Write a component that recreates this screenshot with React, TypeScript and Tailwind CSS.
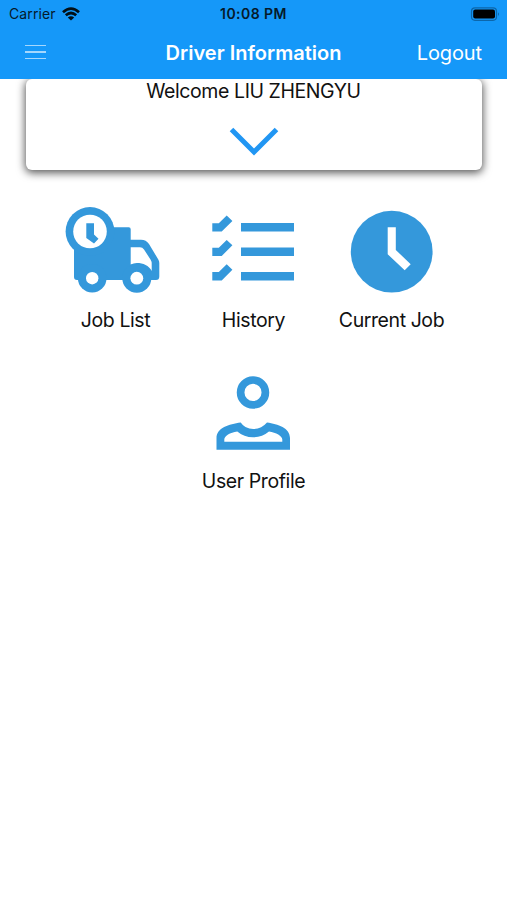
import React from "react";

type TileProps = { label: string; spacing: string; viewBox: string; children: React.ReactNode };

function Tile({ label, spacing, viewBox, children }: TileProps) {
  return (
    <button className="flex w-[138px] flex-col items-center">
      <svg viewBox={viewBox} className="h-[106px] w-[138px]" fill="#3498db">
        {children}
      </svg>
      <span className={"h-6 whitespace-nowrap text-[19.5px] leading-6 " + spacing}>{label}</span>
    </button>
  );
}

function StatusBar() {
  return (
    <div className="grid h-7 grid-cols-3 items-center pl-[9px] pr-[7px] text-[14px] leading-7 text-[#051a2b]">
      <div className="flex items-center gap-[6px]">
        <span className="tracking-[0.1px]">Carrier</span>
        <svg viewBox="0 0 18 14" className="h-[14px] w-[18px]" fill="none" stroke="#021018" strokeWidth="2.7">
          <path d="M1 5.2Q9-2 17 5.2M3.8 8.3Q9 3.7 14.2 8.3" />
          <path d="M9 13.6 5.8 10.5Q9 7.8 12.2 10.5Z" fill="#021018" stroke="none" />
        </svg>
      </div>
      <span className="-ml-[2px] text-center font-semibold tracking-[0.45px]">10:08 PM</span>
      <svg viewBox="0 0 30 14" className="h-[14px] w-[30px] justify-self-end">
        <rect x="1.5" y=".9" width="25" height="12.4" rx="3.5" fill="none" stroke="#0c66aa" strokeWidth="1.2" />
        <rect x="3.2" y="2.6" width="21.8" height="9" rx="2" fill="#000" />
        <path d="M28 5.2q2 1.8 0 3.7Z" fill="#0c66aa" />
      </svg>
    </div>
  );
}

export default function App() {
  return (
    <div className="flex h-[900px] w-[507px] flex-col overflow-hidden bg-white font-['Inter','Liberation_Sans',sans-serif] text-[#111]">
      <header className="relative z-10 h-[79px] shrink-0 bg-[#1598f9]">
        <StatusBar />
        <div className="grid h-[48px] grid-cols-[1fr_auto_1fr] items-center px-[25px] text-white">
          <button aria-label="Menu" className="flex w-[21px] flex-col gap-[5px]">
            <span className="h-[1.5px] bg-[#a5d7fd]" />
            <span className="h-[1.5px] bg-[#a5d7fd]" />
            <span className="h-[1.5px] bg-[#a5d7fd]" />
          </button>
          <h1 className="pt-px text-[20px] font-semibold tracking-[0.02px]">Driver Information</h1>
          <button className="justify-self-end pt-px text-[20px] tracking-[-0.1px]">Logout</button>
        </div>
      </header>
      <section className="mx-[25.5px] flex h-[91px] shrink-0 flex-col items-center rounded-[6px] bg-white shadow-[0_2px_9px_1px_rgba(0,0,0,0.65)]">
        <p className="h-6 whitespace-nowrap text-[19.5px] leading-6 tracking-[-0.42px]">Welcome LIU ZHENGYU</p>
        <svg viewBox="229 126 50 32" className="mt-[23px] h-8 w-[50px]" fill="none" stroke="#2196f3" strokeWidth="5">
          <path d="M231.5 129.5 254 152 276.5 129.5" />
        </svg>
      </section>
      <main className="mx-auto mt-[32px] flex w-[414px] flex-wrap justify-center gap-y-[31px]">
        <Tile label="Job List" spacing="tracking-[-0.42px]" viewBox="47 202 138 106">
          <path fillRule="evenodd" d="M74 231V277q0 3 3 3H156q3.3 0 3.3-3.5V263q0-2-1-3.5L149 244q-2.8-4.3-8-4.3H130.7V229.3q0-2-2-2H105ZM130.7 247.3H140q2.5 0 4 2.3l6.5 9.8q1.2 2 1.2 4V271C149 265.5 143 263 137 263q-3.5 0-6.3 1.5Z" />
          <circle cx="92.2" cy="278.2" r="14.3" />
          <circle cx="136.8" cy="278.2" r="14.5" />
          <circle cx="90" cy="231.5" r="24.4" />
          <circle cx="90" cy="231.5" r="16.8" fill="#fff" />
          <circle cx="92.2" cy="278.2" r="6.2" fill="#fff" />
          <circle cx="136.8" cy="278.2" r="6.4" fill="#fff" />
          <path d="M86.3 223.3H94V234.5L98.5 238.8 94 243.5 86.3 238Z" />
        </Tile>
        <Tile label="History" spacing="tracking-[-0.38px]" viewBox="185 202 138 106">
          {[0, 24.4, 48.8].map((y) => (
            <g key={y} transform={`translate(0 ${y})`}>
              <path d="M212.3 223.3H218.8L226.7 215.5 232.4 220.9 221.7 231.6H212.3Z" />
              <path d="M241 223.1H294V231.6H241Z" />
            </g>
          ))}
        </Tile>
        <Tile label="Current Job" spacing="tracking-[-0.42px]" viewBox="323 202 138 106">
          <circle cx="391.7" cy="251.7" r="40.9" />
          <path fill="#fff" d="M387.7 227.3H395.8V250L410.7 264.2 404.7 270.2 387.7 254.3Z" />
        </Tile>
        <Tile label="User Profile" spacing="tracking-[-0.4px]" viewBox="185 363 138 106">
          <circle cx="253" cy="392.4" r="12.4" fill="none" stroke="#3498db" strokeWidth="7.7" />
          <path fillRule="evenodd" d="M216.5 449.7V438C216.5 428 229 424 240.7 422.5Q245 429 253.2 429T267 422.5C278 424 290 428 290 438V449.7ZM224.3 441.8H282.3V439.5C282.3 436 276 432.5 269 431.5Q262 437.3 253 437.3T237.3 431.5C230 432.5 224.3 436 224.3 439.5Z" />
        </Tile>
      </main>
    </div>
  );
}
